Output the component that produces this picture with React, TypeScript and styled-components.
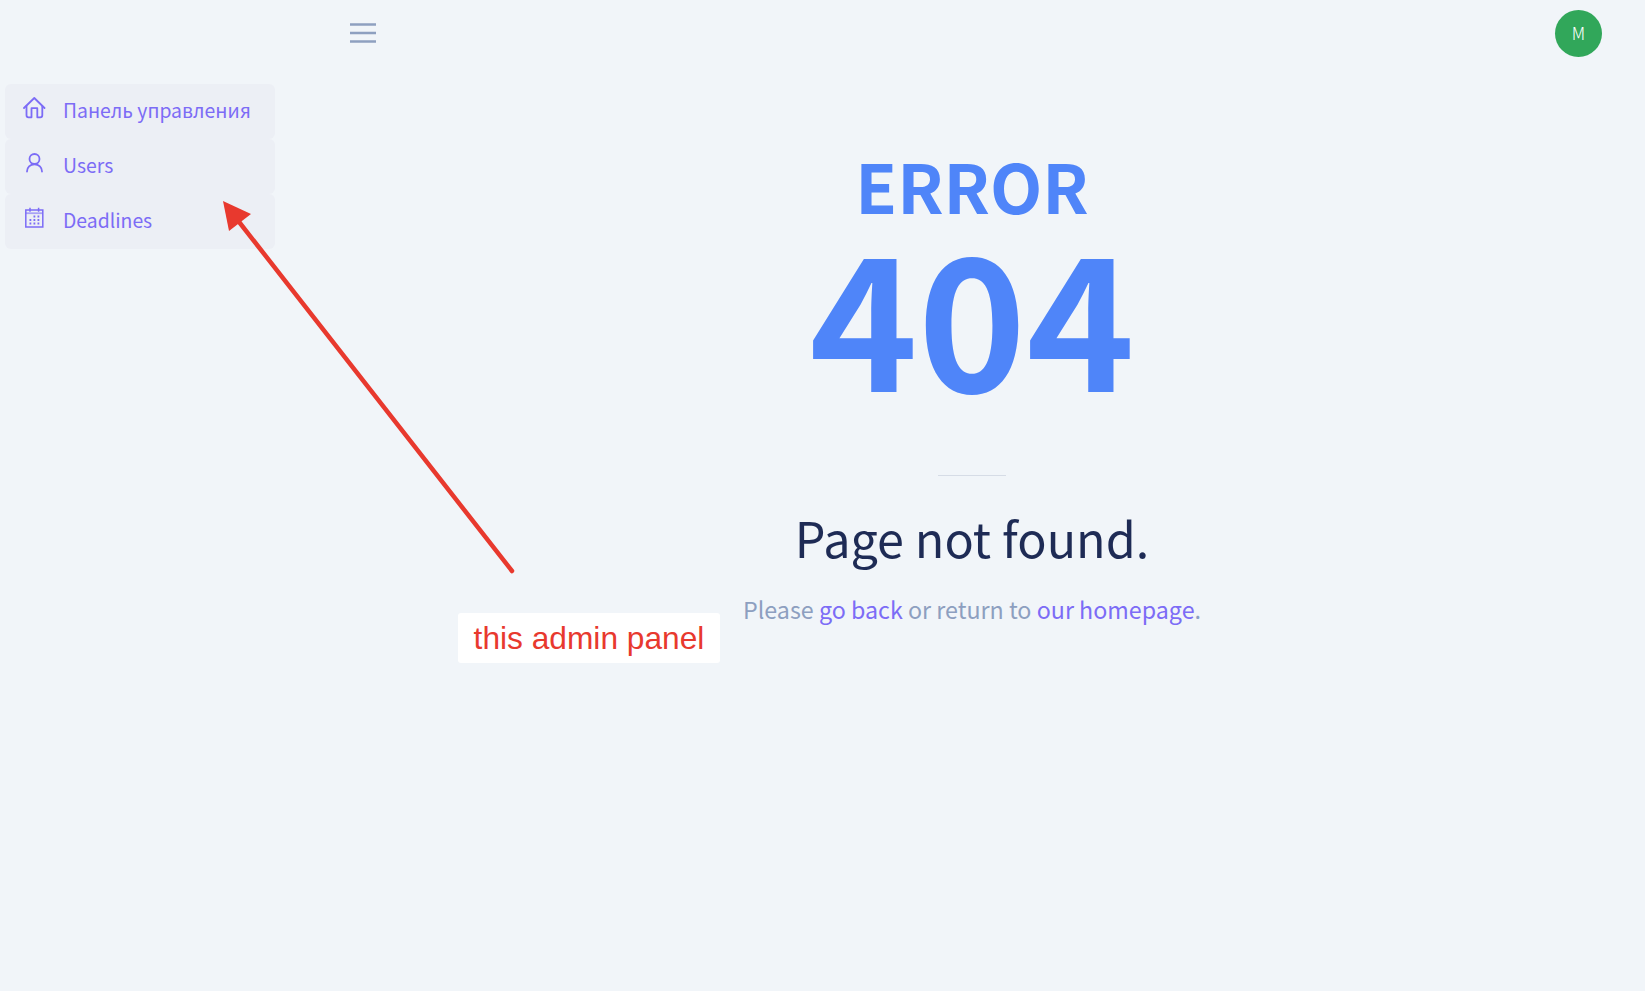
import React, { FunctionComponent } from 'react';

import styled, { createGlobalStyle } from 'styled-components';

const GlobalStyle = createGlobalStyle`
  html, body {
    margin: 0;
    padding: 0;
    background: #f1f5f9;
    font-family: "Noto Sans CJK SC", "Noto Sans", sans-serif;
  }
`;

const Page = styled("div")`
  position: relative;
  display: grid;
  grid-template-columns: 299px 1fr;
  min-height: 991px;
  overflow: hidden;
`;

const Sidebar = styled("aside")`
  padding: 84px 0 0 5px;
`;

const NavList = styled("nav")`
  display: flex;
  flex-direction: column;
  width: 270px;
`;

const NavItem = styled("a")`
  display: flex;
  align-items: center;
  gap: 16px;
  box-sizing: border-box;
  height: 55px;
  padding: 0 18px;
  border-radius: 6px;
  background: #eceff5;
  color: #7c6cf6;
  font-size: 19.4px;
  text-decoration: none;
  white-space: nowrap;

  svg {
    flex: none;
    width: 24px;
    height: 24px;
    margin-top: -5px;
  }
`;

const NavLabel = styled("span")`
  line-height: 1;
  margin-bottom: 3px;
`;

const Content = styled("div")`
  display: flex;
  flex-direction: column;
`;

const Header = styled("header")`
  display: flex;
  align-items: center;
  justify-content: space-between;
  height: 67px;
  padding: 0 43px 0 51px;
`;

const MenuButton = styled("button")`
  display: flex;
  padding: 0 0 2px;
  border: 0;
  background: none;
  color: #8ea0c0;

  svg {
    width: 26px;
    height: 20px;
  }
`;

const Avatar = styled("div")`
  display: flex;
  align-items: center;
  justify-content: center;
  box-sizing: border-box;
  width: 47px;
  height: 47px;
  padding-bottom: 3px;
  border-radius: 50%;
  background: #31a75a;
  color: #ffffff;
  font-size: 17px;
  font-weight: 300;
`;

const Main = styled("main")`
  display: flex;
  flex-direction: column;
  align-items: center;
  padding-top: 82px;
`;

const ErrorTitle = styled("div")`
  color: #4f85f9;
  font-size: 68px;
  font-weight: 700;
  line-height: 71px;
`;

const ErrorCode = styled("div")`
  color: #4f85f9;
  font-size: 184px;
  font-weight: 700;
  line-height: 184px;
`;

const Divider = styled("hr")`
  width: 68px;
  height: 1px;
  margin: 71px 0 0;
  border: 0;
  background: #d6dce6;
`;

const Heading = styled("h1")`
  margin: 31px 0 0;
  color: #1e2b55;
  font-size: 48.5px;
  font-weight: 400;
  line-height: 60px;
`;

const Message = styled("p")`
  margin: 26px 0 0;
  color: #8d9fc0;
  font-size: 23.25px;
  line-height: 32px;
`;

const TextLink = styled("a")`
  color: #7c6cf6;
  text-decoration: none;
`;

const AnnotationArrow = styled("svg")`
  position: absolute;
  top: 0;
  left: 0;
  width: 1645px;
  height: 991px;
  pointer-events: none;
`;

const AnnotationLabel = styled("div")`
  position: absolute;
  top: 613px;
  left: 458px;
  box-sizing: border-box;
  width: 262px;
  height: 50px;
  border-radius: 3px;
  background: #ffffff;
  color: #e8392e;
  font-family: "Liberation Sans", Arial, sans-serif;
  font-size: 31.7px;
  line-height: 50px;
  text-align: center;
`;

const HomeIcon: FunctionComponent = () => (
  <svg viewBox="0 0 24 24" fill="none" stroke="currentColor" strokeWidth="1.8" strokeLinejoin="round" strokeLinecap="round">
    <path d="M1 11 11.3 1 21.5 11" />
    <path d="M3.5 9v9.3a2 2 0 0 0 2 2h3V11.2h5.8v9.1h3a2 2 0 0 0 2-2V9" />
  </svg>
);

const UserIcon: FunctionComponent = () => (
  <svg viewBox="0 0 24 24" fill="none" stroke="currentColor" strokeWidth="1.8" strokeLinecap="round">
    <circle cx="11.5" cy="7" r="5" />
    <path d="M4 19.5c0-4 3-7.2 7.5-7.2s7.5 3.2 7.5 7.2" />
  </svg>
);

const CalendarIcon: FunctionComponent = () => (
  <svg viewBox="0 0 24 24" fill="none" stroke="currentColor" strokeWidth="1.5">
    <rect x="2.8" y="3" width="17" height="17" />
    <path d="M2.8 6.2h17" strokeWidth="1.8" opacity="0.6" />
    <path d="M7 0.8v4M15.6 0.8v4" />
    <path
      d="M10.5 9.5h1.8M14.5 9.5h1.8M6.5 13h1.8M10.5 13h1.8M14.5 13h1.8M6.5 16.5h1.8M10.5 16.5h1.8M14.5 16.5h1.8"
      strokeWidth="1.8"
    />
  </svg>
);

const App: FunctionComponent = () => {
  return (
    <Page>
      <GlobalStyle />
      <Sidebar>
        <NavList>
          <NavItem href="#">
            <HomeIcon />
            <NavLabel>Панель управления</NavLabel>
          </NavItem>
          <NavItem href="#">
            <UserIcon />
            <NavLabel>Users</NavLabel>
          </NavItem>
          <NavItem href="#">
            <CalendarIcon />
            <NavLabel>Deadlines</NavLabel>
          </NavItem>
        </NavList>
      </Sidebar>
      <Content>
        <Header>
          <MenuButton>
            <svg viewBox="0 0 26 20" fill="none" stroke="currentColor" strokeWidth="2.6">
              <path d="M0 1.5h26M0 10h26M0 18.5h26" />
            </svg>
          </MenuButton>
          <Avatar>M</Avatar>
        </Header>
        <Main>
          <ErrorTitle>ERROR</ErrorTitle>
          <ErrorCode>404</ErrorCode>
          <Divider />
          <Heading>Page not found.</Heading>
          <Message>
            Please <TextLink href="#">go back</TextLink> or return to{" "}
            <TextLink href="#">our homepage</TextLink>.
          </Message>
        </Main>
      </Content>
      <AnnotationArrow viewBox="0 0 1645 991">
        <path d="M512 571 236 218" fill="none" stroke="#e8392e" strokeWidth="4.5" strokeLinecap="round" />
        <path d="M223 201 251 214 229 231Z" fill="#e8392e" />
      </AnnotationArrow>
      <AnnotationLabel>this admin panel</AnnotationLabel>
    </Page>
  );
};

export default App;
